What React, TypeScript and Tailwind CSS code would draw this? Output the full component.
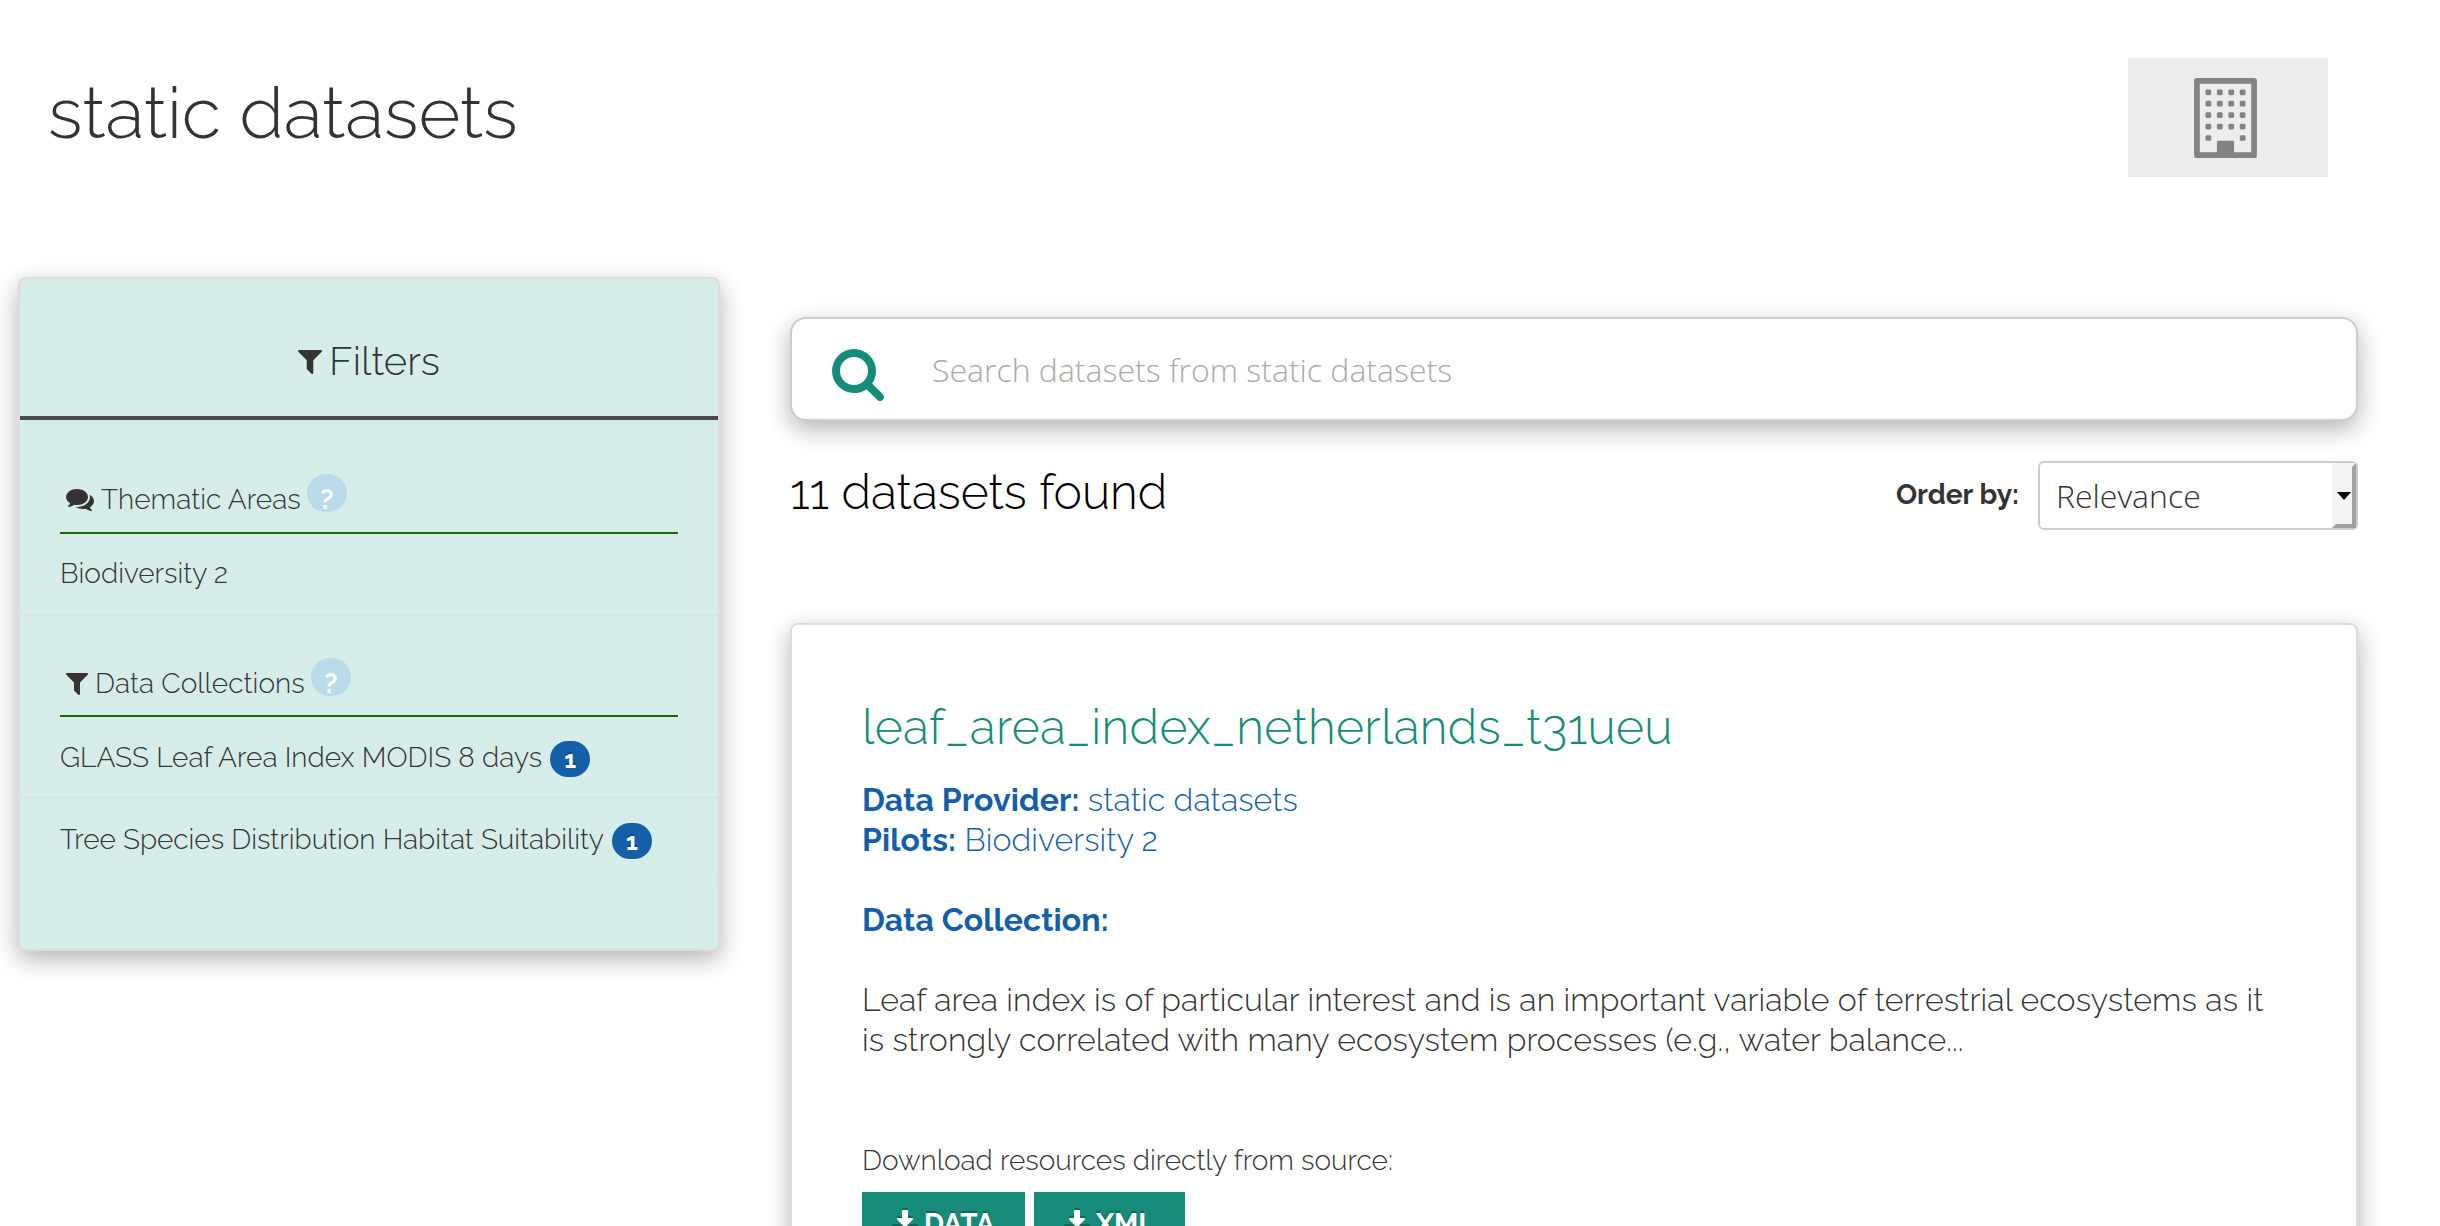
import type { ReactNode } from "react";

function FilterIcon({ className }: { className: string }) {
  return (
    <svg viewBox="192 256 1408 1408" fill="currentColor" className={className}>
      <path d="M1595 295q17 41-14 70l-493 493v742q0 42-39 59-13 5-25 5-27 0-45-19l-256-256q-19-19-19-45v-486l-493-493q-31-29-14-70 17-39 59-39h1280q42 0 59 39z" />
    </svg>
  );
}

function CommentsIcon({ className }: { className: string }) {
  return (
    <svg viewBox="0 256 1792 1408" fill="currentColor" className={className}>
      <path d="M1408 768q0 139-94 257t-256.5 186.5-353.5 68.5q-86 0-176-16-124 88-278 128-36 9-86 16h-3q-11 0-20.5-8t-11.5-21q-1-3-1-6.5t.5-6.5 2-6l2.5-5 3.5-5.5 4-5 4.5-5 4-4.5q5-6 23-25t26-29.5 22.5-29 25-38.5 20.5-44q-124-72-195-177t-71-224q0-139 94-257t256.5-186.5 353.5-68.5 353.5 68.5 256.5 186.5 94 257zm384 256q0 120-71 224.5t-195 176.5q10 24 20.5 44t25 38.5 22.5 29 26 29.5 23 25q1 1 4 4.5t4.5 5 4 5 3.5 5.5l2.5 5 2 6 .5 6.5-1 6.5q-3 14-13 22t-22 7q-50-7-86-16-154-40-278-128-90 16-176 16-271 0-472-132 58 4 88 4 161 0 309-45t264-129q125-92 192-212t67-254q0-77-23-152 129 71 204 178t75 230z" />
    </svg>
  );
}

function SearchIcon({ className }: { className: string }) {
  return (
    <svg viewBox="64 128 1664 1664" fill="currentColor" className={className}>
      <path d="M1216 832q0-185-131.5-316.5t-316.5-131.5-316.5 131.5-131.5 316.5 131.5 316.5 316.5 131.5 316.5-131.5 131.5-316.5zm512 832q0 52-38 90t-90 38q-54 0-90-38l-343-342q-179 124-399 124-143 0-273.5-55.5t-225-150-150-225-55.5-273.5 55.5-273.5 150-225 225-150 273.5-55.5 273.5 55.5 225 150 150 225 55.5 273.5q0 220-124 399l343 343q37 37 37 90z" />
    </svg>
  );
}

function DownloadIcon({ className }: { className: string }) {
  return (
    <svg viewBox="64 0 1664 1536" fill="currentColor" className={className}>
      <path d="M1344 1344q0-26-19-45t-45-19-45 19-19 45 19 45 45 19 45-19 19-45zm256 0q0-26-19-45t-45-19-45 19-19 45 19 45 45 19 45-19 19-45zm128-224v320q0 40-28 68t-68 28h-1472q-40 0-68-28t-28-68v-320q0-40 28-68t68-28h465l135 136q58 56 136 56t136-56l136-136h464q40 0 68 28t28 68zm-325-569q17 41-14 70l-448 448q-18 19-45 19t-45-19l-448-448q-31-29-14-70 17-39 59-39h256v-448q0-26 19-45t45-19h256q26 0 45 19t19 45v448h256q42 0 59 39z" />
    </svg>
  );
}

const windows = [2, 4, 6, 8].flatMap((y) => [2, 4, 6, 8].map((x) => [x, y])).concat([[2, 10], [8, 10]]);

function BuildingIcon({ className }: { className: string }) {
  return (
    <svg viewBox="0 0 11 14" fill="currentColor" className={className}>
      <path fillRule="evenodd" d="M.5 0h10q.5 0 .5.5v13q0 .5-.5.5H.5q-.5 0-.5-.5V.5Q0 0 .5 0zM1 1v12h3v-1.75q0-.25.25-.25h2.5q.25 0 .25.25V13h3V1z" />
      {windows.map(([x, y]) => (
        <rect key={`${x}-${y}`} x={x} y={y} width="1" height="1" rx=".25" />
      ))}
    </svg>
  );
}

function FacetHeading({ icon, title, className }: { icon: ReactNode; title: string; className: string }) {
  return (
    <h3 className={`mx-10 flex items-start border-b-2 border-[#176a07] text-[28px] leading-[28px] ${className}`}>
      {icon}
      <span className="mt-px ml-[7px] tracking-[0.05px]">{title}</span>
      <span className="-mt-[11px] -mb-4 ml-[6px] h-[38px] w-10 rounded-full bg-[#bbdaea] pt-[12px] text-center font-bold text-white">?</span>
    </h3>
  );
}

function FacetItem({ label, count, className }: { label: string; count?: number; className: string }) {
  return (
    <li className={`flex h-[82px] items-start border-b-2 border-dotted border-[#ddd] pl-10 text-[28px] leading-[28px] ${className}`}>
      <span>{label}</span>
      {count !== undefined && (
        <span className="-mt-[3px] ml-2 h-9 w-10 rounded-[18px] bg-[#155fa8] text-center text-[24px] leading-[37px] font-bold text-white [text-shadow:0_-2px_0_rgba(0,0,0,0.25)]">
          {count}
        </span>
      )}
    </li>
  );
}

function DownloadButton({ label, className }: { label: string; className: string }) {
  return (
    <a className={`flex h-20 items-start bg-[#168b79] pt-[18px] pl-[30px] text-[28px] leading-[28px] font-bold text-white [text-shadow:0_-2px_0_rgba(0,0,0,0.25)] ${className}`}>
      <DownloadIcon className="h-6 w-[26px] drop-shadow-[0_-2px_0_rgba(0,0,0,0.25)]" />
      <span className="ml-[6px]">{label}</span>
    </a>
  );
}

const cardShadow = "shadow-[0_8px_24px_0_rgba(0,0,0,0.3)]";

export default function App() {
  return (
    <div className="h-[1226px] w-[2440px] overflow-hidden bg-white font-['Raleway','Lato',sans-serif] font-light text-[#333]">
      <header className="flex h-[277px] items-start justify-between pt-[58px] pr-[112px] pl-12">
        <h1 className="mt-[19px] text-[72px] leading-[72px]">static datasets</h1>
        <div className="flex h-[119px] w-[200px] justify-center bg-[#ededed] pt-5 pr-[5px]">
          <BuildingIcon className="h-[80px] w-[63px] text-[#838383]" />
        </div>
      </header>
      <main className="flex items-start pl-[18px]">
        <aside className={`h-[674px] w-[702px] rounded-lg border-2 border-[#ddd] bg-[#d7edea] ${cardShadow}`}>
          <h2 className="flex h-[141px] items-start justify-center border-b-4 border-[#4a4a4d] pt-[62px] text-[40px] leading-[40px]">
            <FilterIcon className="mt-[9px] mr-[7px] h-6 w-6" />
            Filters
          </h2>
          <FacetHeading className="h-[114px] pt-[65px]" title="Thematic Areas" icon={<CommentsIcon className="mt-1 ml-[6px] h-[22px] w-7" />} />
          <ul>
            <FacetItem className="pt-[26px]" label="Biodiversity 2" />
          </ul>
          <FacetHeading className="h-[101px] pt-[53px]" title="Data Collections" icon={<FilterIcon className="mt-1 ml-[6px] h-[22px] w-[22px]" />} />
          <ul>
            <FacetItem className="pt-[27px] tracking-[0.03px]" label="GLASS Leaf Area Index MODIS 8 days" count={1} />
            <FacetItem className="pt-[27px] tracking-[-0.02px]" label="Tree Species Distribution Habitat Suitability" count={1} />
          </ul>
        </aside>
        <section className="mt-10 ml-[70px] w-[1568px]">
          <div className={`flex h-[104px] items-start rounded-[16px] border-2 border-[#ccc] bg-white pl-10 ${cardShadow}`}>
            <SearchIcon className="mt-[30px] h-[52px] w-[52px] text-[#168b79]" />
            <input
              className="ml-12 h-[100px] grow bg-transparent font-['Open_Sans',sans-serif] text-[32px] font-light outline-none placeholder:text-[#aaa]"
              placeholder="Search datasets from static datasets"
            />
          </div>
          <div className="mt-10 flex h-[69px] items-start">
            <h2 className="mt-[7px] text-[48px] leading-[48px] text-black">11 datasets found</h2>
            <label className="mt-5 ml-auto text-[28px] leading-[28px] font-bold">Order by:</label>
            <div className="ml-[19px] flex h-[69px] w-[320px] justify-between rounded-[6px] border-2 border-[#ccc] bg-white pl-4 font-['Open_Sans',sans-serif] text-[32px] leading-[65px]">
              Relevance
              <span className="flex w-6 items-center justify-end border-4 border-t-[#f5f4f3] border-r-[#a3a19f] border-b-[#a3a19f] border-l-[#f5f4f3] bg-[#f5f4f3] pr-[1px]">
                <svg viewBox="0 0 14 8" className="h-2 w-[14px]">
                  <path d="M0 0h14L7 8z" fill="#000" />
                </svg>
              </span>
            </div>
          </div>
          <article className={`mt-[93px] h-[800px] rounded-lg border-2 border-[#ddd] bg-white pt-[78px] pr-20 pl-[70px] ${cardShadow}`}>
            <h3 className="text-[48px] leading-[48px] tracking-[0.33px] text-[#168c78]">leaf_area_index_netherlands_t31ueu</h3>
            <div className="mt-[29px] text-[32px] leading-10 tracking-[0.1px] text-[#155fa8]">
              <p><strong className="font-bold">Data Provider:</strong> static datasets</p>
              <p><strong className="font-bold">Pilots:</strong> Biodiversity 2</p>
              <p className="mt-10"><strong className="font-bold">Data Collection:</strong></p>
            </div>
            <p className="mt-10 text-[32px] leading-10 tracking-[0.13px]">
              Leaf area index is of particular interest and is an important variable of terrestrial ecosystems as it is strongly correlated with many ecosystem processes (e.g., water balance...
            </p>
            <p className="mt-[87px] text-[28px] leading-[28px]">Download resources directly from source:</p>
            <div className="mt-[17px] flex gap-[9px]">
              <DownloadButton className="w-[163px]" label="DATA" />
              <DownloadButton className="w-[151px]" label="XML" />
            </div>
          </article>
        </section>
      </main>
    </div>
  );
}
